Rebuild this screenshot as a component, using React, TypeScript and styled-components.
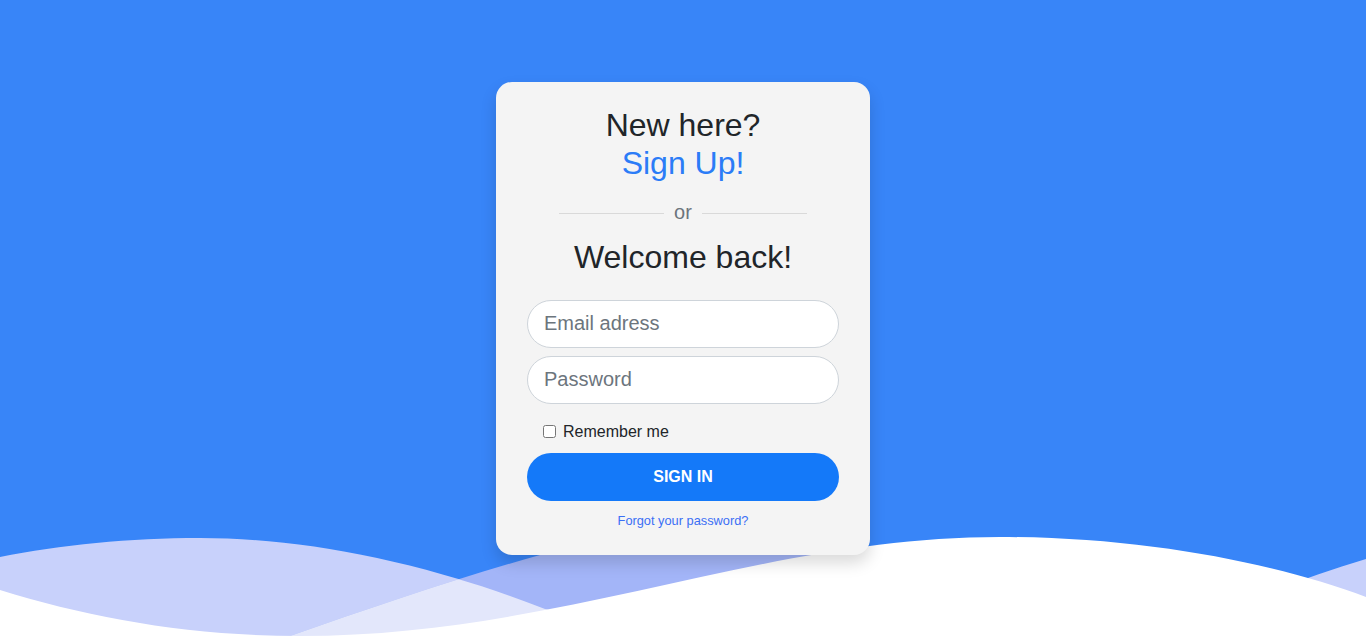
import React from 'react';
import styled, { createGlobalStyle } from 'styled-components';

const GlobalStyle = createGlobalStyle`
  html, body {
    margin: 0;
    padding: 0;
  }

  body {
    font-family: 'Liberation Sans', Arial, sans-serif;
    background-color: #3885f8;
    color: #212529;
  }

  * {
    box-sizing: border-box;
  }
`;

const WAVE_ONE =
  'M0,20 C60,8 130,1 200,1 C300,1 420,23 545,72 L900,163 L1100,123 C1200,83 1280,48 1366,22 L1366,100 L0,100 Z';
const WAVE_TWO =
  'M250,113 C350,78 450,43 540,18 C620,-4 720,-12 800,3 C850,13 900,43 1000,83 L1000,113 Z';
const WAVE_WHITE =
  'M0,53 C90,81 190,99 300,99 C560,99 760,0 1000,0 C1150,0 1280,28 1366,60 L1366,100 L0,100 Z';

const Waves: React.FC = () => (
  <WaveSvg viewBox="0 0 1366 100" preserveAspectRatio="none">
    <defs>
      <clipPath id="wave-two-clip">
        <path d={WAVE_TWO} />
      </clipPath>
    </defs>
    <path d={WAVE_ONE} fill="#c8d1fb" />
    <path d={WAVE_TWO} fill="#a3b5f8" />
    <path d={WAVE_ONE} fill="#e3e7fb" clipPath="url(#wave-two-clip)" />
    <path d={WAVE_WHITE} fill="#ffffff" />
  </WaveSvg>
);

const App: React.FC = () => {
  return (
    <Page>
      <GlobalStyle />
      <Waves />
      <Card>
        <Heading>
          New here?
          <SignUpLink href="#">Sign Up!</SignUpLink>
        </Heading>

        <Divider>
          <DividerLine />
          <DividerText>or</DividerText>
          <DividerLine />
        </Divider>

        <Welcome>Welcome back!</Welcome>

        <Form onSubmit={(e) => e.preventDefault()}>
          <Field type="email" placeholder="Email adress" />
          <Field type="password" placeholder="Password" />

          <RememberRow>
            <Checkbox type="checkbox" id="remember" />
            <RememberLabel htmlFor="remember">Remember me</RememberLabel>
          </RememberRow>

          <SubmitButton type="submit">Sign in</SubmitButton>
        </Form>

        <ForgotLink href="#">Forgot your password?</ForgotLink>
      </Card>
    </Page>
  );
};

export default App;

const Page = styled.main`
  min-height: 100vh;
  width: 100%;
  overflow: hidden;

  position: relative;
  display: flex;
  align-items: center;
  justify-content: center;
`;

const WaveSvg = styled.svg`
  position: absolute;
  left: 0;
  bottom: 0;
  width: 100%;
  height: 100px;
  display: block;
`;

const Card = styled.section`
  width: 374px;
  padding: 24px 31px 25px;
  position: relative;
  z-index: 1;

  border-radius: 16px;
  background-color: #f4f4f4;
  box-shadow: 0 8px 16px rgba(0, 0, 0, 0.15);

  display: flex;
  flex-direction: column;
  align-items: stretch;
  text-align: center;
`;

const Heading = styled.h2`
  margin: 0;

  font-weight: 400;
  font-size: 32px;
  line-height: 1.2;
  color: #212529;

  display: flex;
  flex-direction: column;
  align-items: center;
`;

const SignUpLink = styled.a`
  color: #2b7cf7;
  text-decoration: none;
`;

const Divider = styled.div`
  margin: 14px auto 0;
  width: 248px;
  height: 30px;

  display: flex;
  align-items: center;
  gap: 10px;
`;

const DividerLine = styled.span`
  flex: 1;
  height: 1px;
  margin-top: 3px;
  background-color: #d9d9d9;
`;

const DividerText = styled.span`
  font-size: 20px;
  line-height: 1.5;
  color: #6c757d;
`;

const Welcome = styled.h3`
  margin: 11px 0 0;

  font-weight: 400;
  font-size: 32px;
  line-height: 1.2;
  color: #212529;
`;

const Form = styled.form`
  margin-top: 24px;

  display: flex;
  flex-direction: column;
  gap: 8px;
`;

const Field = styled.input`
  width: 100%;
  height: 48px;
  padding: 0 16px;

  border: 1px solid #ced4da;
  border-radius: 24px;
  background-color: #ffffff;
  outline: none;

  font-family: inherit;
  font-size: 20px;
  color: #212529;

  &::placeholder {
    color: #6c757d;
  }
`;

const RememberRow = styled.div`
  margin-top: 8px;
  height: 24px;
  padding-left: 16px;

  display: flex;
  align-items: center;
  gap: 7px;
`;

const Checkbox = styled.input`
  margin: 0;
  width: 13px;
  height: 13px;
`;

const RememberLabel = styled.label`
  font-size: 16px;
  line-height: 24px;
  color: #212529;
`;

const SubmitButton = styled.button`
  margin-top: 1px;
  width: 100%;
  height: 48px;

  border: none;
  border-radius: 24px;
  background-color: #1479f9;
  cursor: pointer;

  font-family: inherit;
  font-weight: 700;
  font-size: 16px;
  text-transform: uppercase;
  color: #ffffff;
`;

const ForgotLink = styled.a`
  margin-top: 10px;

  font-size: 12.8px;
  line-height: 1.5;
  color: #3b6ff5;
  text-decoration: none;
`;
